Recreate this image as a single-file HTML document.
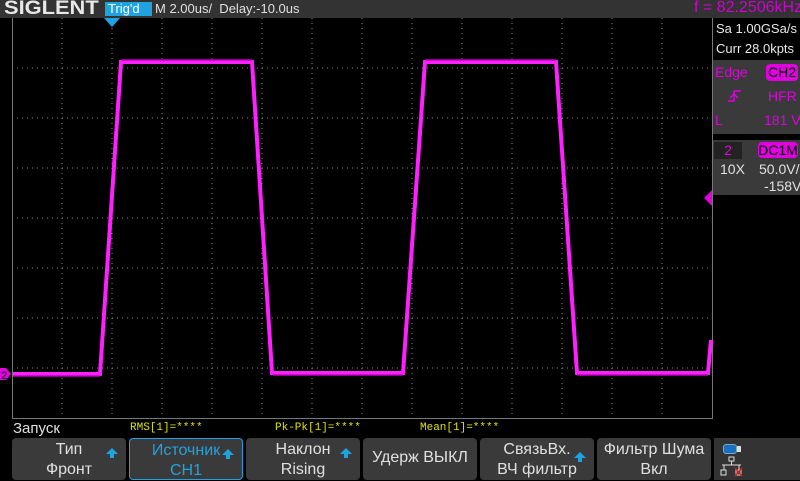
<!DOCTYPE html>
<html><head><meta charset="utf-8"><style>
body{margin:0;width:800px;height:480px;background:#000;overflow:hidden;font-family:"Liberation Sans",sans-serif;position:relative}
.a{position:absolute;white-space:nowrap}
.btn{position:absolute;top:438px;height:42px;background:#3a3a3a;border-radius:4px;color:#e0e0e0;font-size:16px;text-align:center;line-height:20px;box-sizing:border-box;padding-top:2px;white-space:nowrap}
.arr{position:absolute;right:8px;top:10px;width:0;height:0;border-left:6px solid transparent;border-right:6px solid transparent;border-bottom:6px solid #1fa3e0}
.arr:after{content:"";position:absolute;left:-2px;top:6px;width:4px;height:4px;background:#1fa3e0}
</style></head><body>
<div class="a" style="left:0;top:0;width:800px;height:18px;background:#333"></div>
<div class="a" style="left:4px;top:-2px;font-size:19px;font-weight:bold;color:#e8e8e8;transform:scaleX(1.15);transform-origin:left">SIGLENT</div>
<div class="a" style="left:105px;top:2px;width:44px;height:14px;background:#1fa3e0;color:#fff;font-size:13px;line-height:14px;padding-left:3px">Trig'd</div>
<div class="a" style="left:155px;top:1px;font-size:13px;color:#e0e0e0">M 2.00us/&nbsp; Delay:-10.0us</div>
<div class="a" style="left:694px;top:-1px;font-size:16px;color:#d000d0">f = 82.2506kHz</div>
<svg class="a" style="left:0;top:0" width="800" height="480">
<g stroke="#888" stroke-width="1" stroke-dasharray="1,4" fill="none">
<path d="M62 18V418M112 18V418M162 18V418M212 18V418M262 18V418M312 18V418M362 18V418M412 18V418M462 18V418M512 18V418M562 18V418M612 18V418M662 18V418"/>
<path d="M12 68H712M12 118H712M12 168H712M12 218H712M12 268H712M12 318H712M12 368H712"/>
</g>
<path d="M12.5 18V418.5H712.5V18" stroke="#777" fill="none"/>
<path d="M104 18l8 9 8-9z" fill="#1fa3e0"/>
<path d="M704 198l8-8v16z" fill="#e000e0"/>
<path d="M0 368h6l5 6-5 6H0z" fill="#e000e0"/>
<text x="1" y="379" font-size="11" fill="#000" font-family="Liberation Sans">2</text>
<path d="M13 374H100L121 62H252L272 373H403L425 62H556L577 373H708L711 340" stroke="#ff20ff" stroke-width="4" fill="none"/>
<path d="M13 376H100M121 60H252M273 375H403M425 60H556M577 375H708" stroke="#c000c0" stroke-width="1.5" fill="none"/>
</svg>
<div class="a" style="left:713px;top:19px;width:84px;height:40px;background:#000;color:#e8e8e8;font-size:13px;line-height:20px;padding-left:3px">Sa 1.00GSa/s<br>Curr 28.0kpts</div>
<div class="a" style="left:713px;top:60px;width:87px;height:74px;background:#3a3a3a"></div>
<div class="a" style="left:715px;top:64px;font-size:14px;color:#e000e0">Edge</div>
<div class="a" style="left:766px;top:64px;width:32px;height:17px;background:#e000e0;border-radius:4px;color:#000;font-size:14px;text-align:center;line-height:17px">CH2</div>
<svg class="a" style="left:727px;top:88px" width="16" height="16"><path d="M1 13h6V3h7M3 10l4-4 4 4" stroke="#e000e0" stroke-width="1.5" fill="none"/></svg>
<div class="a" style="left:768px;top:88px;font-size:14px;color:#e000e0">HFR</div>
<div class="a" style="left:715px;top:112px;font-size:14px;color:#e000e0">L</div>
<div class="a" style="left:764px;top:112px;font-size:14px;color:#e000e0">181 V</div>
<div class="a" style="left:713px;top:140px;width:87px;height:55px;background:#3a3a3a"></div>
<div class="a" style="left:714px;top:142px;width:28px;height:17px;background:#222;color:#e000e0;font-size:14px;text-align:center">2</div>
<div class="a" style="left:758px;top:142px;width:40px;height:16px;background:#e000e0;border-radius:4px;color:#000;font-size:14px;text-align:center;line-height:16px">DC1M</div>
<div class="a" style="left:720px;top:161px;font-size:14px;color:#e0e0e0">10X</div>
<div class="a" style="left:759px;top:161px;font-size:14px;color:#e0e0e0">50.0V/</div>
<div class="a" style="left:764px;top:178px;font-size:14px;color:#e0e0e0">-158V</div>
<div class="a" style="left:13px;top:420px;font-size:15px;color:#e0e0e0">Запуск</div>
<div class="a" style="left:130px;top:422px;font-size:11px;color:#e0e000;font-family:'Liberation Mono',monospace">RMS[1]=****</div>
<div class="a" style="left:275px;top:422px;font-size:11px;color:#e0e000;font-family:'Liberation Mono',monospace">Pk-Pk[1]=****</div>
<div class="a" style="left:420px;top:422px;font-size:11px;color:#e0e000;font-family:'Liberation Mono',monospace">Mean[1]=****</div>
<div class="btn" style="left:12px;width:114px">Тип<br>Фронт<div class="arr"></div></div>
<div class="btn" style="left:129px;width:114px;border:1px solid #1fa3e0;color:#1fa3e0">Источник<br>CH1<div class="arr"></div></div>
<div class="btn" style="left:246px;width:114px">Наклон<br>Rising<div class="arr"></div></div>
<div class="btn" style="left:363px;width:114px;line-height:40px;padding:0">Удерж ВЫКЛ</div>
<div class="btn" style="left:480px;width:114px">СвязьВх.<br>ВЧ фильтр<div class="arr" style="top:14px"></div></div>
<div class="btn" style="left:597px;width:114px">Фильтр Шума<br>Вкл</div>
<div class="a" style="left:714px;top:438px;width:86px;height:42px;background:#333"></div>
<div class="a" style="left:723px;top:444px;width:12px;height:8px;background:#1a6fc0;border:1px solid #7ab;border-radius:3px"></div>
<div class="a" style="left:737px;top:446px;width:4px;height:6px;background:#ddd"></div>
<svg class="a" style="left:720px;top:456px" width="26" height="22"><g stroke="#ddd" fill="none"><rect x="9" y="1" width="5" height="4"/><path d="M11.5 5v4M2 9h19M4 9v5M19 9v5"/><rect x="1" y="14" width="5" height="5"/><rect x="16" y="14" width="5" height="5"/></g><path d="M15 12l7 8M22 12l-7 8" stroke="#e02020" stroke-width="1.5"/></svg>
</body></html>
